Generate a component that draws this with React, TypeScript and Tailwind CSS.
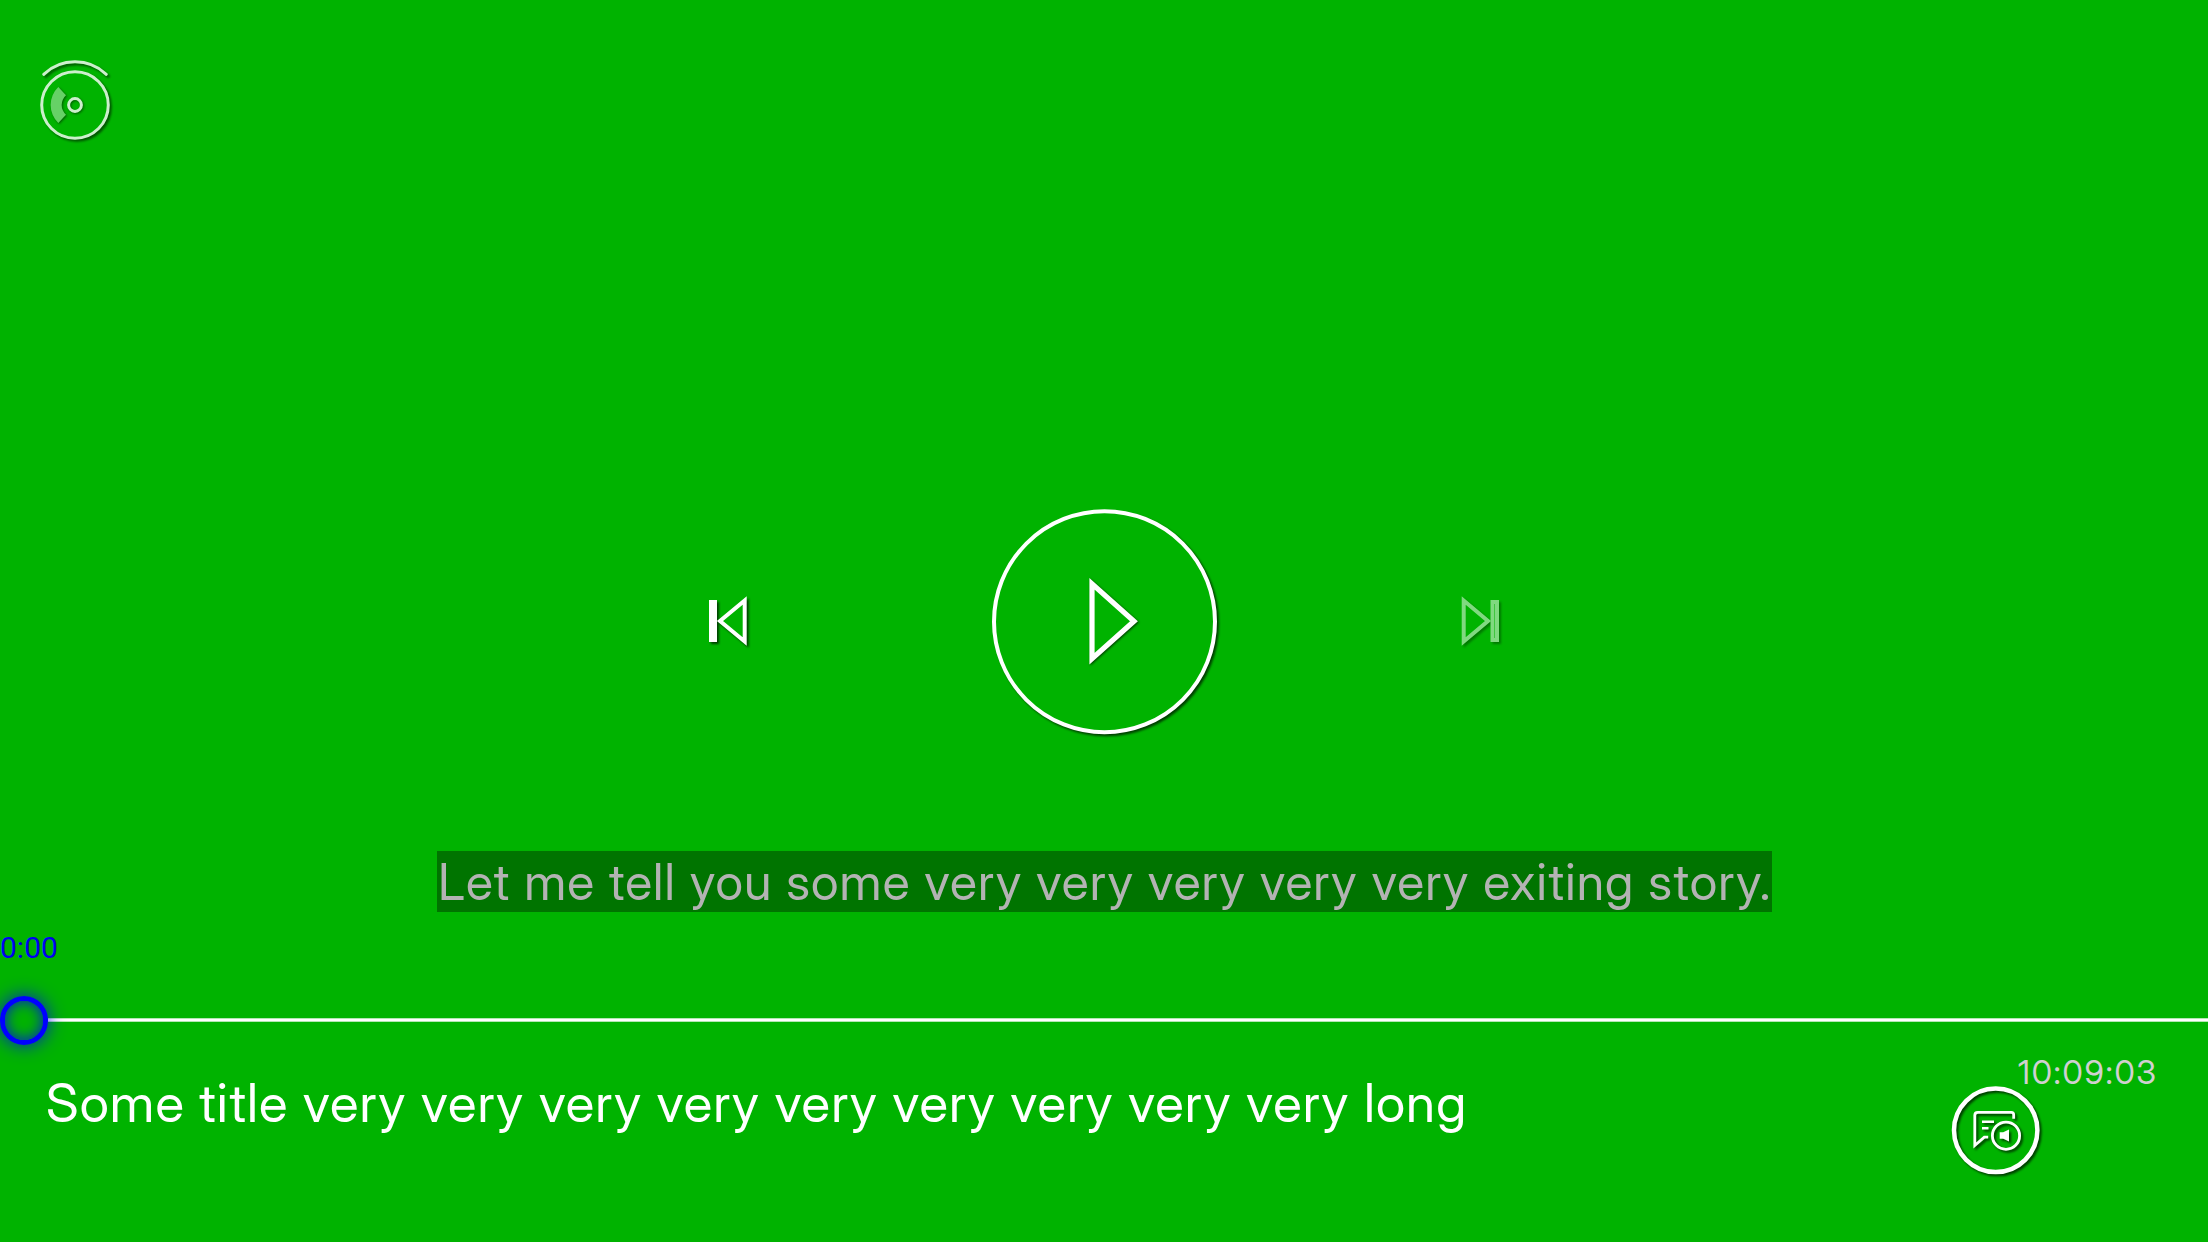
const shadow = "drop-shadow-[2px_2px_1px_rgba(0,0,0,0.65)]";

function DiscIcon() {
  return (
    <svg className={`block h-[80px] w-[80px] overflow-visible opacity-80 ${shadow}`} viewBox="0 0 80 80" fill="none" stroke="#fff" strokeWidth="3">
      <path d="M8.7 19.3a45.6 45.6 0 0 1 62.6 0" strokeLinecap="round" />
      <circle cx="40" cy="50" r="33.3" fill="#00b300" />
      <g className="drop-shadow-[1px_1px_1px_rgba(0,0,0,0.6)]">
        <circle cx="40" cy="50" r="6.4" />
        <path d="M23.3 32A25 25 0 0 0 23.3 68L31 59.7A13 13 0 0 1 31 40.3Z" fill="#80d980" stroke="none" />
      </g>
    </svg>
  );
}

function PreviousIcon() {
  return (
    <svg className={`block h-[60px] w-[60px] overflow-visible ${shadow}`} viewBox="0 0 60 60" fill="#00b300" stroke="#fff" strokeWidth="4">
      <path d="M46.7 9.5v41L22 30Z" />
      <path d="M13 11h4v38h-4Z" />
    </svg>
  );
}

function NextIcon() {
  return (
    <svg className={`block h-[60px] w-[60px] overflow-visible opacity-50 ${shadow}`} viewBox="0 0 60 60" fill="#00b300" stroke="#fff" strokeWidth="4">
      <path d="M13.7 9.5v41L38 30Z" />
      <path d="M42.5 11h4.5v38h-4.5Z" />
    </svg>
  );
}

function PlayIcon() {
  return (
    <svg className={`block h-[226px] w-[226px] overflow-visible ${shadow}`} viewBox="0 0 226 226" fill="#00b300" stroke="#fff">
      <circle cx="113.5" cy="112.7" r="110.5" strokeWidth="4" />
      <path className="drop-shadow-[1.5px_1.5px_1px_rgba(0,0,0,0.65)]" d="M101 74.7v75l42-37.5Z" strokeWidth="5.2" />
    </svg>
  );
}

function AudioSubtitlesIcon() {
  return (
    <svg className={`block h-[90px] w-[90px] overflow-visible ${shadow}`} viewBox="0 0 90 90" fill="none" stroke="#fff">
      <circle cx="44.7" cy="45.3" r="41.7" strokeWidth="4.5" />
      <path d="M62.7 33.7v-3.9q0-2.5-2.5-2.5H26.8q-3 0-3 3v30.2l9.5-8.3h3.9" strokeWidth="2.8" />
      <path d="M31 36.7h12M31 43.3h6.5" strokeWidth="2.6" />
      <circle cx="55" cy="50.7" r="13.6" strokeWidth="2.8" />
      <path d="M48.7 47.2h3.5l5.8-2.8v12l-5.8-2.7h-3.5Z" fill="#fff" stroke="none" />
    </svg>
  );
}

export default function App() {
  return (
    <main className="flex h-[1242px] w-[2208px] flex-col overflow-hidden bg-[#00b300] font-['Inter_Display','Inter',sans-serif] text-white">
      <header className="h-[509px] shrink-0 pt-[55px] pl-[35px]">
        <DiscIcon />
      </header>

      <section className="flex h-[226px] shrink-0 items-center pl-[698px]">
        <button className="-mt-[2px]"><PreviousIcon /></button>
        <button className="ml-[233px]"><PlayIcon /></button>
        <button className="-mt-[2px] ml-[233px]"><NextIcon /></button>
      </section>

      <section className="mt-[116px] flex h-[61px] shrink-0 pl-[437px]">
        <p className="h-[61px] w-[1335px] bg-black/35 pl-[1px] text-[50px] leading-[62px] tracking-[1.15px] whitespace-nowrap text-[#b3b3b3]">
          Let me tell you some very very very very very exiting story.
        </p>
      </section>

      <section className="flex h-[134px] shrink-0 flex-col pt-[18px]">
        <span className="h-[66px] font-['Roboto',sans-serif] text-[30px] leading-[36px] text-[#0000f0]">0:00</span>
        <div className="flex h-[49px] items-start">
          <div className="z-10 h-[49px] w-[48px] shrink-0 rounded-full border-[5px] border-[#0000ff] shadow-[0_0_18px_rgba(0,0,255,0.85),inset_0_0_14px_rgba(0,0,255,0.85)]" />
          <div className="mt-[22px] h-[4px] grow border-y border-white/70 bg-white bg-clip-padding" />
        </div>
      </section>

      <footer className="flex grow items-start justify-between pl-[46px]">
        <h1 className="pt-[24px] text-[53px] leading-[66px] font-normal tracking-[1.1px] whitespace-nowrap">
          Some title very very very very very very very very very long
        </h1>
        <div className="flex w-[257px] flex-col items-start">
          <time className="mt-[6px] ml-[67px] text-[33px] leading-[40px] tracking-[1.7px] whitespace-nowrap text-[#d0d0d0]">10:09:03</time>
          <button className="-mt-[7px]"><AudioSubtitlesIcon /></button>
        </div>
      </footer>
    </main>
  );
}
